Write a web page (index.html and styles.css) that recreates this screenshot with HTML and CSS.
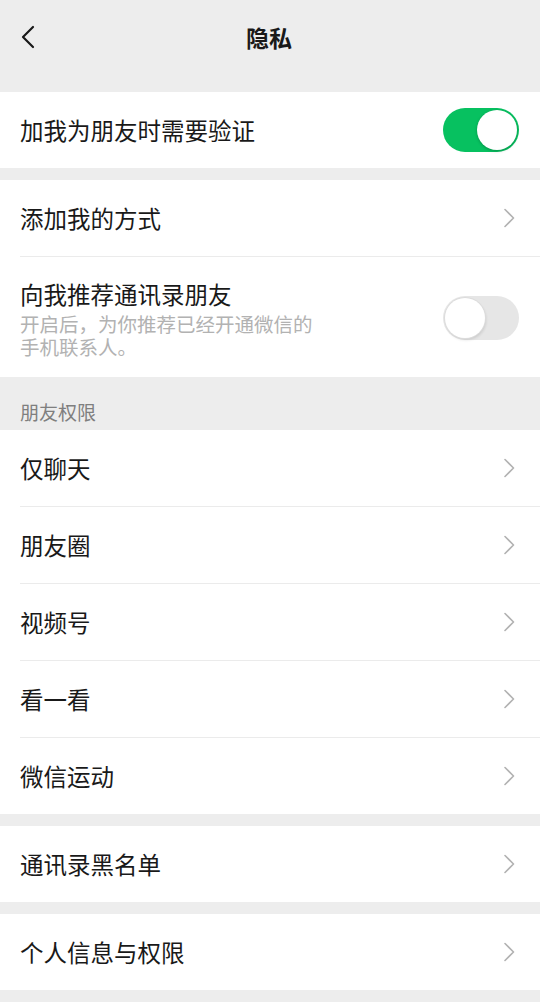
FILE: index.html
```html
<!DOCTYPE html>
<html lang="zh-CN">
<head>
    <meta charset="UTF-8">
    <meta name="viewport" content="width=device-width, initial-scale=1.0">
    <title>隐私</title>
    <link rel="stylesheet" href="styles.css">
</head>
<body>
    <!-- Top bar -->
    <div class="nav-bar">
        <button class="back-btn" aria-label="返回">
            <svg width="16" height="24" viewBox="0 0 16 24">
                <path d="M13 2 L3 12 L13 22" fill="none" stroke="#191919" stroke-width="2.2" stroke-linecap="round" stroke-linejoin="round"/>
            </svg>
        </button>
        <div class="nav-title">隐私</div>
        <div class="nav-spacer"></div>
    </div>

    <div class="group">
        <div class="cell">
            <div class="cell-inner">
                <div class="cell-title">加我为朋友时需要验证</div>
                <span class="switch on"><span class="knob"></span></span>
            </div>
        </div>
    </div>

    <div class="group">
        <div class="cell">
            <div class="cell-inner">
                <div class="cell-title">添加我的方式</div>
                <svg class="arrow" width="12" height="20" viewBox="0 0 12 20">
                    <path d="M2 1.5 L10.5 10 L2 18.5" fill="none" stroke="#b2b2b2" stroke-width="1.6" stroke-linecap="round" stroke-linejoin="round"/>
                </svg>
            </div>
        </div>
        <div class="cell">
            <div class="cell-inner tall">
                <div class="cell-body">
                    <div class="cell-title">向我推荐通讯录朋友</div>
                    <div class="cell-desc">开启后，为你推荐已经开通微信的手机联系人。</div>
                </div>
                <span class="switch"><span class="knob"></span></span>
            </div>
        </div>
    </div>

    <div class="section-label">朋友权限</div>

    <div class="group" id="friendList"></div>

    <div class="group">
        <div class="cell">
            <div class="cell-inner">
                <div class="cell-title">通讯录黑名单</div>
                <svg class="arrow" width="12" height="20" viewBox="0 0 12 20">
                    <path d="M2 1.5 L10.5 10 L2 18.5" fill="none" stroke="#b2b2b2" stroke-width="1.6" stroke-linecap="round" stroke-linejoin="round"/>
                </svg>
            </div>
        </div>
    </div>

    <div class="group">
        <div class="cell">
            <div class="cell-inner">
                <div class="cell-title">个人信息与权限</div>
                <svg class="arrow" width="12" height="20" viewBox="0 0 12 20">
                    <path d="M2 1.5 L10.5 10 L2 18.5" fill="none" stroke="#b2b2b2" stroke-width="1.6" stroke-linecap="round" stroke-linejoin="round"/>
                </svg>
            </div>
        </div>
    </div>

    <script>
        const friendItems = ['仅聊天', '朋友圈', '视频号', '看一看', '微信运动'];
        const friendList = document.getElementById('friendList');

        friendItems.forEach(name => {
            const cell = document.createElement('div');
            cell.className = 'cell';
            cell.innerHTML =
                '<div class="cell-inner">' +
                    '<div class="cell-title">' + name + '</div>' +
                    '<svg class="arrow" width="12" height="20" viewBox="0 0 12 20">' +
                        '<path d="M2 1.5 L10.5 10 L2 18.5" fill="none" stroke="#b2b2b2" stroke-width="1.6" stroke-linecap="round" stroke-linejoin="round"/>' +
                    '</svg>' +
                '</div>';
            friendList.appendChild(cell);
        });
    </script>
</body>
</html>
```

FILE: styles.css
```css
* {
    box-sizing: border-box;
}

body {
    margin: 0;
    background-color: #ededed;
    font-family: "Noto Sans CJK SC", sans-serif;
    color: #191919;
    width: 540px;
    min-height: 1002px;
}

.nav-bar {
    display: flex;
    align-items: center;
    justify-content: space-between;
    height: 76px;
    padding: 0 12px 3px;
    margin-bottom: 16px;
}

.back-btn {
    display: flex;
    align-items: center;
    background: none;
    border: none;
    padding: 0;
    margin-left: 8px;
    width: 40px;
    cursor: pointer;
}

.nav-title {
    font-size: 23px;
    font-weight: 700;
    line-height: 32px;
}

.nav-spacer {
    width: 50px;
}

.group {
    background-color: #ffffff;
    margin-bottom: 12px;
}

.cell {
    padding-left: 20px;
}

.cell-inner {
    display: flex;
    align-items: center;
    justify-content: space-between;
    height: 77px;
    padding-right: 21px;
    border-bottom: 1px solid #ebebeb;
}

.cell:last-child .cell-inner {
    border-bottom: none;
    height: 76px;
}

.cell-inner.tall,
.cell:last-child .cell-inner.tall {
    height: 120px;
    padding-top: 21px;
    padding-bottom: 19px;
}

.cell-title {
    font-size: 23.5px;
    line-height: 32px;
}

.cell-body {
    align-self: flex-start;
}

.cell-desc {
    margin-top: 2px;
    max-width: 300px;
    font-size: 19.5px;
    line-height: 23px;
    color: #b2b2b2;
}

.arrow {
    margin-right: 4px;
}

/* group header sits right under the previous group's margin */
.section-label {
    margin-top: -12px;
    padding: 22px 20px 5px;
    font-size: 19px;
    line-height: 26px;
    color: #7f7f7f;
}

/* switches */
.switch {
    display: flex;
    align-items: center;
    justify-content: flex-start;
    width: 76px;
    height: 44px;
    padding: 2px;
    border-radius: 22px;
    background-color: #e6e6e6;
    flex-shrink: 0;
}

.switch.on {
    justify-content: flex-end;
    background-color: #07c160;
}

.knob {
    width: 40px;
    height: 40px;
    border-radius: 50%;
    background-color: #ffffff;
    box-shadow: 0 1px 3px rgba(0, 0, 0, 0.25);
}

.switch:not(.on) .knob {
    box-shadow: 0 0 0 1px #dcdcdc, 1px 2px 3px rgba(0, 0, 0, 0.12);
}
```
